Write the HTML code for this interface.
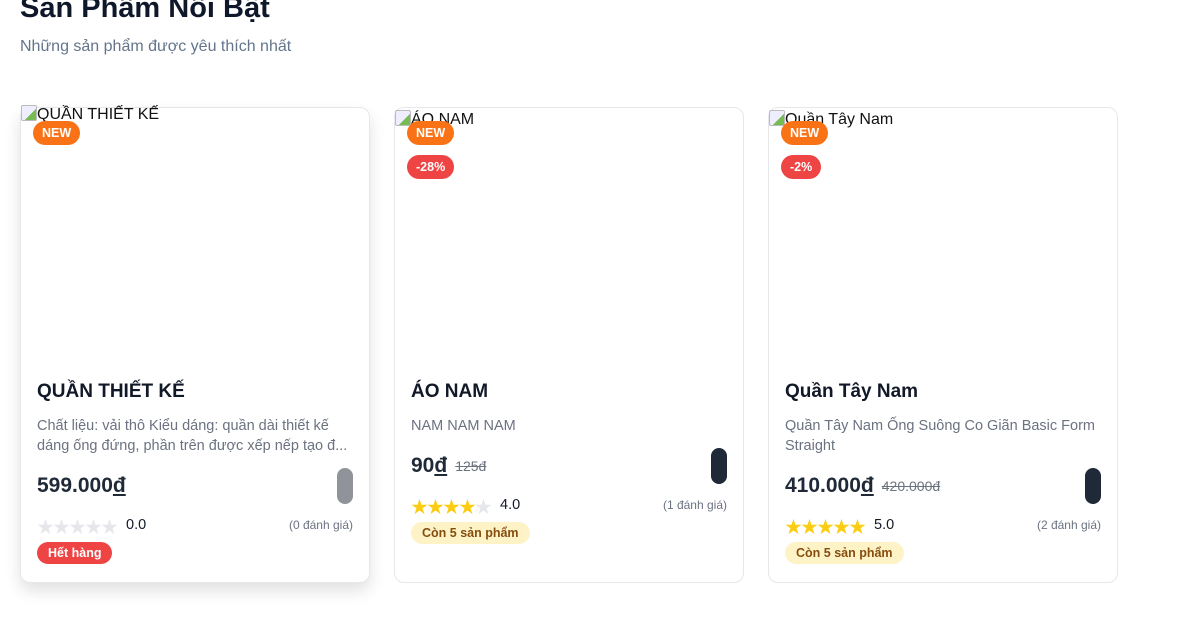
<!DOCTYPE html>
<html><head><meta charset="utf-8"><style>
*{box-sizing:border-box;margin:0;padding:0}
body{width:1192px;height:629px;overflow:hidden;background:#fff;font-family:"Liberation Sans","Noto Sans CJK SC",sans-serif;color:#111827;position:relative}
h1{position:absolute;left:20px;top:-8px;font-size:29px;font-weight:700;color:#0f172a}
.sub{position:absolute;left:20px;top:38px;font-size:16px;color:#64748b}
.card{position:absolute;top:107px;width:350px;height:476px;border:1px solid #e5e7eb;border-radius:10px;background:#fff}
.card.s{box-shadow:0 8px 16px rgba(0,0,0,.12)}
.alt{position:absolute;left:0;top:2px;font-size:16px;color:#111;white-space:nowrap}
.alt i{display:inline-block;width:16px;height:16px;border:1px solid #bbb;border-radius:2px;vertical-align:-2px;background:linear-gradient(135deg,#eef 60%,#7b5 60%)}
.b{position:absolute;left:12px;height:24px;line-height:24px;padding:0 9px;border-radius:12px;color:#fff;font-size:12.5px;font-weight:700}
.new{top:13px;background:#f97316}
.dis{top:47px;background:#ef4444}
.body{position:absolute;left:16px;right:16px;top:273px}
.t{font-size:19px;font-weight:600;color:#111827;height:28px}
.d{margin-top:7px;font-size:14.5px;line-height:20px;color:#6b7280}
.pr{margin-top:10px;height:40px;position:relative;display:flex;align-items:center}
.p{font-size:21px;font-weight:700;color:#1f2937}
.o{font-size:14px;color:#6b7280;text-decoration:line-through;margin-left:8px}
.tg{position:absolute;right:0;top:2px;width:16px;height:36px;border-radius:8px;background:#1f2937}
.rt{height:38px;display:flex;align-items:center;font-size:14.5px}
.st{color:#facc15;font-size:17px;letter-spacing:-1px;margin-right:9px}
.st.g{color:#e5e7eb}
.rv{margin-left:auto;font-size:12px;color:#6b7280}
.tag{display:inline-block;height:22px;line-height:22px;padding:0 11px;border-radius:11px;font-size:12.5px;font-weight:700;margin-top:-2px}
.out{background:#ef4444;color:#fff}
.lw{background:#fef3c7;color:#854d0e}
</style></head><body>
<h1>Sản Phẩm Nổi Bật</h1>
<div class="sub">Những sản phẩm được yêu thích nhất</div>

<div class="card s" style="left:20px">
<div class="alt" style="top:-3px"><i></i>QUẦN THIẾT KẾ</div>
<div class="b new">NEW</div>
<div class="body">
<div class="t">QUẦN THIẾT KẾ</div>
<div class="d">Chất liệu: vải thô Kiểu dáng: quần dài thiết kế dáng ống đứng, phần trên được xếp nếp tạo đ...</div>
<div class="pr"><span class="p">599.000<u>đ</u></span><span class="tg" style="background:#909399"></span></div>
<div class="rt"><span class="st g">★★★★★</span>0.0<span class="rv">(0 đánh giá)</span></div>
<span class="tag out">Hết hàng</span>
</div></div>

<div class="card" style="left:394px">
<div class="alt"><i></i>ÁO NAM</div>
<div class="b new">NEW</div><div class="b dis">-28%</div>
<div class="body">
<div class="t">ÁO NAM</div>
<div class="d">NAM NAM NAM</div>
<div class="pr"><span class="p">90<u>đ</u></span><span class="o">125đ</span><span class="tg"></span></div>
<div class="rt"><span class="st">★★★★<span style="color:#e5e7eb">★</span></span>4.0<span class="rv">(1 đánh giá)</span></div>
<span class="tag lw">Còn 5 sản phẩm</span>
</div></div>

<div class="card" style="left:768px">
<div class="alt"><i></i>Quần Tây Nam</div>
<div class="b new">NEW</div><div class="b dis">-2%</div>
<div class="body">
<div class="t">Quần Tây Nam</div>
<div class="d">Quần Tây Nam Ống Suông Co Giãn Basic Form Straight</div>
<div class="pr"><span class="p">410.000<u>đ</u></span><span class="o">420.000đ</span><span class="tg"></span></div>
<div class="rt"><span class="st">★★★★★</span>5.0<span class="rv">(2 đánh giá)</span></div>
<span class="tag lw">Còn 5 sản phẩm</span>
</div></div>
</body></html>
